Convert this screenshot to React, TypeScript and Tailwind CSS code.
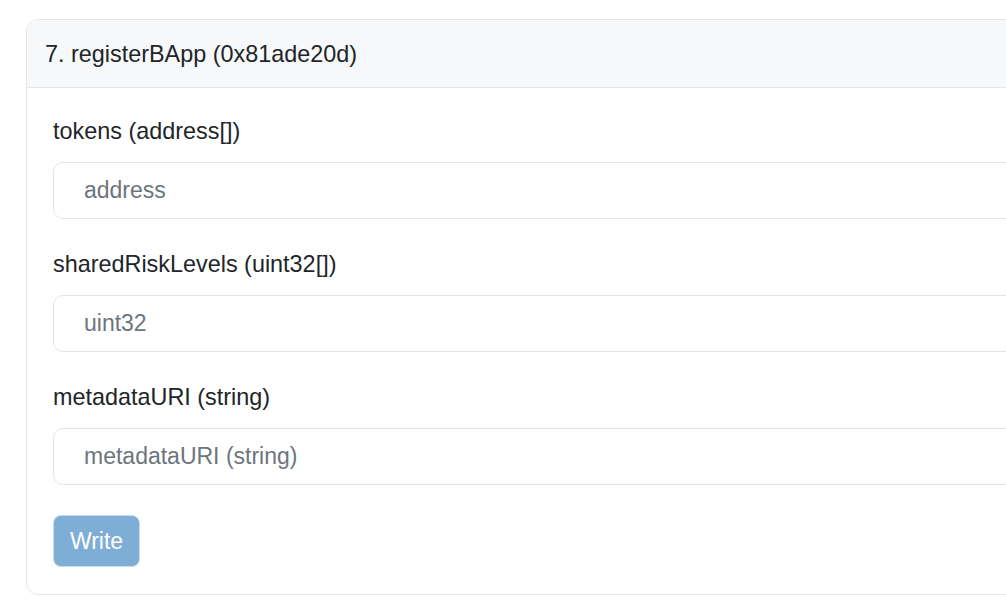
import React from "react";

const fields = [
  { label: "tokens (address[])", placeholder: "address" },
  { label: "sharedRiskLevels (uint32[])", placeholder: "uint32" },
  { label: "metadataURI (string)", placeholder: "metadataURI (string)" },
];

export default function App() {
  return (
    <div className="h-[608px] w-[1006px] overflow-hidden bg-white pl-[26px] pt-[19px] font-['Liberation_Sans',Arial,sans-serif] text-[23.4px] text-[#212529]">
      <div className="w-[1040px] overflow-hidden rounded-[12px] border border-[#e5e7eb]">
        <div className="flex h-[68px] items-center border-b border-[#e6e7ea] bg-[#f7f8fa] px-[18px]">
          <span className="leading-[30px]">7. registerBApp (0x81ade20d)</span>
        </div>
        <form className="px-[26px] pb-[27px] pt-[28px]" onSubmit={(e) => e.preventDefault()}>
          {fields.map((f) => (
            <div key={f.label} className="mb-[30px] last:mb-[31px]">
              <label className="mb-[16px] block leading-[30px]">{f.label}</label>
              <input
                placeholder={f.placeholder}
                className="block h-[57px] w-full rounded-[10px] border border-[#e3e4e6] bg-white px-[30px] text-[23px] outline-none placeholder:text-[#6c757d]"
              />
            </div>
          ))}
          <button
            type="submit"
            disabled
            className="h-[52px] w-[87px] rounded-[8px] border border-[#c6dcf0] bg-[#7eaed6] text-[23px] text-white"
          >
            Write
          </button>
        </form>
      </div>
    </div>
  );
}
